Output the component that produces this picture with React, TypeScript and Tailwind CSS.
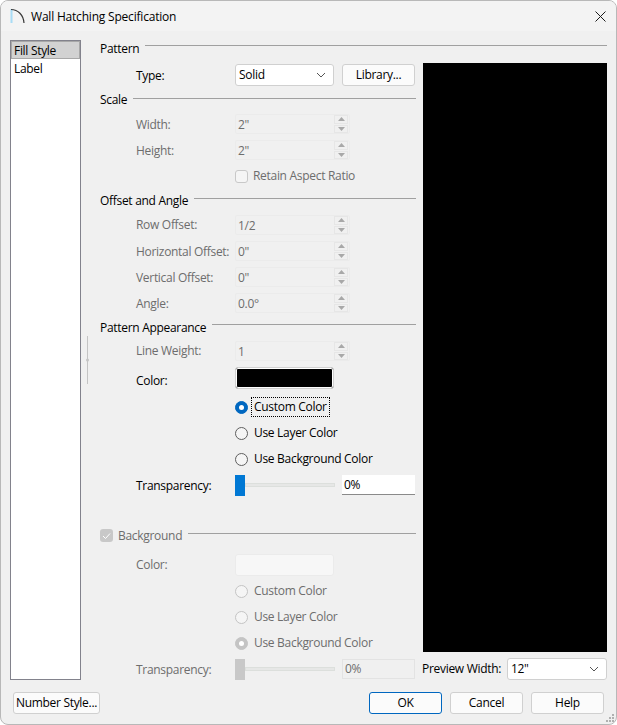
import type { ReactNode } from 'react'

const LABEL_DISABLED = 'text-[#6d6d6d]'

function SectionHeader({ title, disabled, className, lineClass = '-translate-y-[2px]' }: { title: ReactNode; disabled?: boolean; className: string; lineClass?: string }) {
  return (
    <div className={`flex items-center gap-[6px] ${className}`}>
      <span className={`pt-px ${disabled ? LABEL_DISABLED : 'text-black'}`}>{title}</span>
      <div className={`h-px flex-1 bg-[#a0a0a0] ${lineClass}`} />
    </div>
  )
}

function Row({ label, disabled, className = 'h-[26px]', labelClass = 'pt-px', children }: { label?: string; disabled?: boolean; className?: string; labelClass?: string; children?: ReactNode }) {
  return (
    <div className={`flex items-center ${className}`}>
      <span className={`w-[135px] shrink-0 pl-[36px] whitespace-nowrap ${labelClass} ${disabled ? LABEL_DISABLED : 'text-black'}`}>{label}</span>
      {children}
    </div>
  )
}

function SpinField({ value }: { value: string }) {
  return (
    <div className="flex h-[20px] w-[115px] items-center justify-between rounded-[2px] border border-[#ebebeb] bg-[#f0f0f0] pl-[2px] pr-[1px] text-[#6d6d6d]">
      <span className="pt-px">{value}</span>
      <span className="flex h-[18px] w-[14px] flex-col gap-px">
        <span className="flex flex-1 items-center justify-center border border-[#e6e6e6] bg-[#f0f0f0]">
          <svg width="7" height="4" viewBox="0 0 7 4"><path d="M3.500 0L7 4H0z" fill="#a8a8a8" /></svg>
        </span>
        <span className="flex flex-1 items-center justify-center border border-[#e6e6e6] bg-[#f0f0f0]">
          <svg width="7" height="4" viewBox="0 0 7 4"><path d="M0 0h7L3.500 4z" fill="#a8a8a8" /></svg>
        </span>
      </span>
    </div>
  )
}

function Radio({ label, checked, disabled, focused }: { label: string; checked?: boolean; disabled?: boolean; focused?: boolean }) {
  let circle = 'border-[#5f5f5f] bg-[#f5f5f5]'
  if (checked) circle = 'border-[#0067c0] bg-[#0067c0]'
  if (disabled) circle = checked ? 'border-[#c4c4c4] bg-[#c4c4c4]' : 'border-[#c4c4c4] bg-[#f5f5f5]'
  return (
    <div className="flex h-[26px] items-center pl-[135px]">
      <span className={`flex h-[13px] w-[13px] shrink-0 items-center justify-center rounded-full border ${circle}`}>
        {checked && <span className="h-[5px] w-[5px] rounded-full bg-white" />}
      </span>
      <span className={`ml-[4px] px-[2px] leading-[18px] whitespace-nowrap ${focused ? 'outline-1 outline-dotted outline-black' : ''} ${disabled ? LABEL_DISABLED : 'text-black'}`}>
        {label}
      </span>
    </div>
  )
}

function Transparency({ disabled }: { disabled?: boolean }) {
  return (
    <Row label="Transparency:" disabled={disabled}>
      <div className="flex h-[21px] w-[100px] items-center">
        <div className={`h-full w-[10px] shrink-0 ${disabled ? 'bg-[#c8c8c8]' : 'bg-[#0078d4]'}`} />
        <div className="h-[4px] flex-1 border border-[#dcdfdc] bg-[#e6e7e6]" />
      </div>
      <div className={`ml-[7px] flex h-[20px] w-[73px] items-center pl-[2px] ${disabled ? 'border border-[#e3e3e3] bg-[#f0f0f0] text-[#6d6d6d]' : 'border-b border-[#8a8a8a] bg-white text-black'}`}>
        0%
      </div>
    </Row>
  )
}

function Select({ value, className }: { value: string; className: string }) {
  return (
    <div className={`flex h-[22px] items-center justify-between rounded-[3px] border border-[#d0d0d0] bg-white pl-[3px] pr-[7px] text-black ${className}`}>
      <span>{value}</span>
      <svg width="10" height="6" viewBox="0 0 10 6" fill="none" stroke="#555" strokeWidth="1"><path d="M1 1l4 4 4-4" /></svg>
    </div>
  )
}

function Button({ label, className, primary }: { label: string; className: string; primary?: boolean }) {
  return (
    <div className={`flex h-[22px] items-center justify-center rounded-[3px] border text-black ${primary ? 'border-[#0067c0] bg-[#fbfbfb]' : 'border-[#d0d0d0] bg-[#fbfbfb]'} ${className}`}>
      {label}
    </div>
  )
}

export default function App() {
  return (
    <div className="relative flex h-[725px] w-[617px] flex-col overflow-hidden rounded-lg border border-[#b8b8b8] bg-[#f0f0f0] font-['Open_Sans','Noto_Sans',sans-serif] text-[12px] leading-[16px] tracking-[-0.3px]">
      <div className="flex h-[30px] shrink-0 items-center bg-[#f3f3f3] pl-[9px] pr-[10px]">
        <svg width="16" height="16" viewBox="0 0 16 16" fill="none">
          <rect x="0.500" y="1" width="2" height="14" fill="#a8dcf5" />
          <path d="M1 1.500C8 1.500 13.500 7 14 15" stroke="#3a3a3a" strokeWidth="1.200" />
        </svg>
        <span className="ml-[5px] flex-1 pt-px text-black tracking-[-0.2px]">Wall Hatching Specification</span>
        <svg width="11" height="11" viewBox="0 0 11 11" fill="none" stroke="#1a1a1a" strokeWidth="1"><path d="M.5.5l10 10M10.500.5l-10 10" /></svg>
      </div>

      <div className="flex pl-[9px] pt-[9px]">
        <div className="h-[640px] w-[71px] shrink-0 border border-[#82828c] bg-white text-black">
          <div className="flex h-[18px] items-center border border-[#a8a8a8] bg-[#d2d2d2] pl-[2px] pt-px">Fill Style</div>
          <div className="flex h-[18px] items-center pl-[3px] pt-px">Label</div>
        </div>

        <div className="w-[19px] shrink-0 pl-[5px] pt-[296px]">
          <svg width="3" height="48" viewBox="0 0 3 48"><path d="M1.500 0v48" stroke="#c4c4c4" /><circle cx="1.500" cy="24" r="1.500" fill="#c4c4c4" /></svg>
        </div>

        <div className="w-[507px] shrink-0">
          <SectionHeader title="Pattern" className="h-[16px]" lineClass="-translate-y-[3px]" />
          <div className="mt-[6px] flex">
            <div className="w-[316px] shrink-0">
              <Row label="Type:">
                <Select value="Solid" className="w-[99px]" />
                <Button label="Library..." className="ml-[8px] w-[73px]" />
              </Row>
              <SectionHeader title="Scale" className="h-[23px]" lineClass="-translate-y-[1px]" />
              <Row label="Width:" disabled><SpinField value={'2"'} /></Row>
              <Row label="Height:" disabled><SpinField value={'2"'} /></Row>
              <div className="flex h-[26px] items-center pl-[135px]">
                <span className="h-[13px] w-[13px] rounded-[3px] border border-[#c8c8c8] bg-[#f5f5f5]" />
                <span className={`ml-[5px] ${LABEL_DISABLED}`}>Retain Aspect Ratio</span>
              </div>
              <SectionHeader title="Offset and Angle" className="h-[23px]" />
              <Row label="Row Offset:" disabled labelClass=""><SpinField value="1/2" /></Row>
              <Row label="Horizontal Offset:" disabled><SpinField value={'0"'} /></Row>
              <Row label="Vertical Offset:" disabled><SpinField value={'0"'} /></Row>
              <Row label="Angle:" disabled><SpinField value="0.0°" /></Row>
              <SectionHeader title="Pattern Appearance" className="h-[22px]" lineClass="-translate-y-[3px]" />
              <Row label="Line Weight:" disabled labelClass=""><SpinField value="1" /></Row>
              <Row label="Color:" className="mb-[2px] h-[28px]" labelClass="pt-[6px]">
                <div className="h-[22px] w-[99px] rounded-[3px] border border-[#d0d0d0] bg-black ring-1 ring-inset ring-white" />
              </Row>
              <Radio label="Custom Color" checked focused />
              <Radio label="Use Layer Color" />
              <Radio label="Use Background Color" />
              <Transparency />

              <SectionHeader
                disabled
                className="mt-[25px] h-[24px]"
                title={
                  <span className="flex items-center gap-[5px]">
                    <span className="flex h-[13px] w-[13px] items-center justify-center rounded-[3px] bg-[#c8c8c8]">
                      <svg width="9" height="8" viewBox="0 0 9 8" fill="none" stroke="#fff" strokeWidth="1"><path d="M1 4l2.500 2.500L8 1.500" /></svg>
                    </span>
                    Background
                  </span>
                }
              />
              <Row label="Color:" disabled className="mt-[5px] h-[26px]" labelClass="">
                <div className="h-[22px] w-[99px] rounded-[3px] border border-[#ebebeb] bg-[#f7f7f7]" />
              </Row>
              <Radio label="Custom Color" disabled />
              <Radio label="Use Layer Color" disabled />
              <Radio label="Use Background Color" checked disabled />
              <Transparency disabled />
            </div>

            <div className="ml-[7px] w-[184px] shrink-0">
              <div className="mt-px h-[589px] bg-black" />
              <div className="mt-[6px] flex items-center justify-between">
                <span className="-ml-[1px] text-black">Preview Width:</span>
                <Select value={'12"'} className="w-[100px]" />
              </div>
            </div>
          </div>
        </div>
      </div>

      <div className="mt-[10px] flex pl-[12px]">
        <Button label="Number Style..." className="w-[87px]" />
        <Button label="OK" primary className="ml-[269px] w-[73px]" />
        <Button label="Cancel" className="ml-[8px] w-[73px]" />
        <Button label="Help" className="ml-[8px] w-[73px]" />
      </div>

      {/* resize grip */}
      <svg className="absolute bottom-[2px] right-[2px]" width="9" height="9" viewBox="0 0 9 9" fill="#b0b0b0">
        <rect x="7" y="1" width="2" height="2" />
        <rect x="4" y="4" width="2" height="2" />
        <rect x="7" y="4" width="2" height="2" />
        <rect x="1" y="7" width="2" height="2" />
        <rect x="4" y="7" width="2" height="2" />
        <rect x="7" y="7" width="2" height="2" />
      </svg>
    </div>
  )
}
